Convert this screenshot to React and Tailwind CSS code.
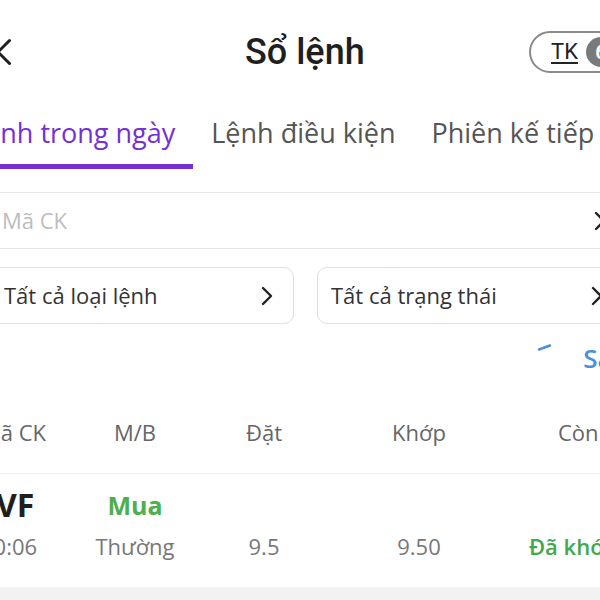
import React from "react";

const tabs = [
  { label: "Lệnh trong ngày", active: true },
  { label: "Lệnh điều kiện", active: false },
  { label: "Phiên kế tiếp", active: false },
];

function Chevron() {
  return (
    <svg width="12" height="20" viewBox="0 0 12 20" fill="none" stroke="#222" strokeWidth="2.4" strokeLinecap="round" strokeLinejoin="round">
      <path d="M2 2l8 8-8 8" />
    </svg>
  );
}

export default function App() {
  return (
    <div className="w-[600px] h-[600px] overflow-hidden bg-white font-['Open_Sans',sans-serif] text-[#333]">
      {/* header */}
      <div className="pt-[31px] h-[73px] flex items-center whitespace-nowrap">
        <div className="w-[245px] h-[42px] shrink-0 flex items-center">
          <svg width="26" height="32" viewBox="0 0 26 32" className="ml-[-15px]" fill="none" stroke="#1f1f1f" strokeWidth="3" strokeLinecap="round">
            <path d="M1.5 4.5l23 23M24.5 4.5l-23 23" />
          </svg>
        </div>
        <h1 className="shrink-0 w-[121px] font-['Roboto',sans-serif] font-medium text-[36px] leading-[42px] text-[#1f1f1f]">Sổ lệnh</h1>
        <div className="ml-[163px] h-[42px] shrink-0 flex items-center gap-[8px] pl-[20px] pr-[10px] border-2 border-[#8a8a8a] rounded-full">
          <span className="font-['Roboto',sans-serif] text-[22px] leading-none underline underline-offset-[3px] text-[#222]">TK</span>
          <span className="w-[30px] h-[30px] rounded-full bg-[#7a7a7a] text-white flex items-center justify-center font-['Roboto',sans-serif] font-bold text-[20px]">6</span>
        </div>
      </div>

      {/* tabs */}
      <div className="flex ml-[-47px] mt-[42px] whitespace-nowrap">
        {tabs.map((t) => (
          <div key={t.label} className="flex flex-col shrink-0">
            <span className={`px-[18px] text-[27px] leading-[36px] ${t.active ? "text-[#7430d4]" : "text-[#555]"}`}>{t.label}</span>
            <div className={`mt-[13px] h-[5px] ${t.active ? "bg-[#7430d4]" : "bg-transparent"}`} />
          </div>
        ))}
      </div>
      <div className="mt-[23px] border-b border-[#e6e6e6]" />

      {/* search */}
      <div className="h-[56px] flex items-center justify-between border-b border-[#e3e3e3]">
        <span className="ml-[2px] text-[22px] text-[#bdbdbd]">Mã CK</span>
        <div className="mr-[-6px]"><Chevron /></div>
      </div>

      {/* filters */}
      <div className="mt-[18px] flex gap-[23px] ml-[-20px] whitespace-nowrap">
        <div className="w-[314px] h-[57px] shrink-0 rounded-[10px] border border-[#e0e0e0] flex items-center justify-between pl-[23px] pr-[20px]">
          <span className="text-[22px] text-[#333]">Tất cả loại lệnh</span>
          <Chevron />
        </div>
        <div className="w-[300px] h-[57px] shrink-0 rounded-[10px] border border-[#e0e0e0] flex items-center pl-[13px]">
          <span className="text-[22px] text-[#333]">Tất cả trạng thái</span>
          <div className="ml-[94px]"><Chevron /></div>
        </div>
      </div>

      {/* refresh / sort */}
      <div className="h-[55px] pt-[12px] flex items-center justify-end whitespace-nowrap">
        <svg width="16" height="8" viewBox="0 0 16 8" className="mt-[-22px] mr-[30px]">
          <path d="M2 6.5L13 2.5" stroke="#4a8fd8" strokeWidth="2.4" strokeLinecap="round" />
        </svg>
        <span className="mr-[-65px] text-[26px] font-semibold text-[#4a90e0] leading-none">Sao kê</span>
      </div>

      {/* table header */}
      <div className="mt-[38px] flex ml-[-19px] items-center whitespace-nowrap text-[22px] text-[#666] leading-[30px]">
        <span className="w-[104px] shrink-0">Mã CK</span>
        <span className="w-[100px] shrink-0 text-center">M/B</span>
        <span className="w-[158px] shrink-0 text-center">Đặt</span>
        <span className="w-[152px] shrink-0 text-center">Khớp</span>
        <span className="shrink-0 pl-[63px]">Còn lại</span>
      </div>
      <div className="mt-[26px] border-b border-[#f0f0f0]" />

      {/* order row */}
      <div className="ml-[-19px] whitespace-nowrap">
        <div className="mt-[16px] flex items-center leading-[30px]">
          <span className="w-[104px] shrink-0 text-[32px] font-bold text-[#1f1f1f] ml-[-3px] mr-[3px]">EVF</span>
          <span className="w-[100px] shrink-0 text-center text-[25px] font-bold text-[#4caf50]">Mua</span>
        </div>
        <div className="mt-[11px] flex items-center text-[22px] leading-[30px] text-[#777]">
          <span className="w-[104px] shrink-0">10:06</span>
          <span className="w-[100px] shrink-0 text-center">Thường</span>
          <span className="w-[158px] shrink-0 text-center">9.5</span>
          <span className="w-[152px] shrink-0 text-center">9.50</span>
          <span className="shrink-0 pl-[34px] font-semibold text-[#43a84a]">Đã khớp</span>
        </div>
      </div>

      <div className="mt-[26px] h-[20px] bg-[#f2f2f2]" />
    </div>
  );
}
